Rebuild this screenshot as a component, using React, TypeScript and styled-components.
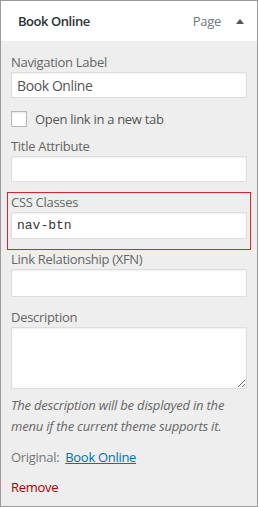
import React from "react";
import styled, { createGlobalStyle } from "styled-components";

const Global = createGlobalStyle`
  html, body { margin: 0; padding: 0; background: #fff; }
  body { font-family: "Open Sans", "Noto Sans", Arial, sans-serif; }
  * { box-sizing: border-box; }
`;

const Panel = styled.div`
  width: 258px;
  height: 507px;
  border: 1px solid #9a9a9a;
  background: #eeeeee;
  display: flex;
  flex-direction: column;
  letter-spacing: -0.3px;
`;

const Header = styled.div`
  height: 40px;
  background: #fff;
  display: flex;
  align-items: center;
  padding: 0 13px 0 17px;
`;

const Title = styled.div`
  flex: 1;
  font-size: 13px;
  font-weight: 600;
  letter-spacing: -0.45px;
  color: #2c3136;
`;

const Kind = styled.span`
  font-size: 13px;
  color: #72777c;
  margin-right: 15px;
`;

const Body = styled.div`
  padding: 12px 10px 9px;
  display: flex;
  flex-direction: column;
`;

const Field = styled.div<{ $mt?: number }>`
  display: flex;
  flex-direction: column;
  margin-top: ${(p) => p.$mt ?? 0}px;
`;

const Label = styled.label`
  font-size: 13px;
  line-height: 19px;
  color: #666;
`;

const Input = styled.input<{ $h: number; $mono?: boolean }>`
  height: ${(p) => p.$h}px;
  width: 100%;
  margin: 0;
  border: 1px solid #ddd;
  background: #fff;
  box-shadow: inset 0 1px 2px rgba(0, 0, 0, 0.07);
  padding: 0 5px;
  font-family: ${(p) =>
    p.$mono ? '"Liberation Mono", "DejaVu Sans Mono", monospace' : '"Open Sans", "Noto Sans", sans-serif'};
  font-size: ${(p) => (p.$mono ? "13px" : "14px")};
  letter-spacing: ${(p) => (p.$mono ? "0" : "-0.4px")};
  color: ${(p) => (p.$mono ? "#32373c" : "#555")};
  outline: none;
`;

const TextArea = styled.textarea`
  height: 62px;
  width: 100%;
  margin: 0;
  display: block;
  border: 1px solid #ddd;
  background: #fff;
  box-shadow: inset 0 1px 2px rgba(0, 0, 0, 0.07);
  font-family: "Open Sans", sans-serif;
  font-size: 14px;
  outline: none;
`;

const CheckRow = styled.label`
  display: flex;
  align-items: center;
  height: 16px;
  margin-top: 13px;
  font-size: 13px;
  color: #555;
`;

const Box = styled.span`
  width: 16px;
  height: 16px;
  border: 1px solid #b4b9be;
  background: #fff;
  box-shadow: inset 0 1px 2px rgba(0, 0, 0, 0.1);
  margin-right: 8px;
  flex: none;
`;

const Highlight = styled.div`
  margin: 10px -4px 0;
  border: 1px solid #e0232a;
  padding: 0 3px 10px;
  display: flex;
  flex-direction: column;
`;

const Help = styled.p`
  margin: 6px 0 0;
  font-size: 13px;
  line-height: 21px;
  font-style: italic;
  letter-spacing: -0.2px;
  color: #666;
`;

const Line = styled.div<{ $mt: number }>`
  margin-top: ${(p) => p.$mt}px;
  font-size: 13px;
  line-height: 19px;
  color: #72777c;
`;

const Link = styled.a`
  color: #0073aa;
  text-decoration: underline;
  margin-left: 6px;
`;

const Remove = styled.a`
  color: #a00;
  text-decoration: none;
`;

export default function App() {
  return (
    <>
      <Global />
      <Panel>
        <Header>
          <Title>Book Online</Title>
          <Kind>Page</Kind>
          <svg width="8" height="5" viewBox="0 0 8 5">
            <polygon points="4,0 8,5 0,5" fill="#555" />
          </svg>
        </Header>
        <Body>
          <Field>
            <Label>Navigation Label</Label>
            <Input $h={26} defaultValue="Book Online" />
          </Field>
          <CheckRow>
            <Box />
            Open link in a new tab
          </CheckRow>
          <Field $mt={10}>
            <Label>Title Attribute</Label>
            <Input $h={26} />
          </Field>
          <Highlight>
            <Label>CSS Classes</Label>
            <Input $h={27} $mono defaultValue="nav-btn" />
          </Highlight>
          <Field>
            <Label>Link Relationship (XFN)</Label>
            <Input $h={28} />
          </Field>
          <Field $mt={11}>
            <Label>Description</Label>
            <TextArea />
          </Field>
          <Help>
            The description will be displayed in the menu if the current theme supports it.
          </Help>
          <Line $mt={11}>
            Original:<Link href="#">Book Online</Link>
          </Line>
          <Line $mt={11}>
            <Remove href="#">Remove</Remove>
          </Line>
        </Body>
      </Panel>
    </>
  );
}
